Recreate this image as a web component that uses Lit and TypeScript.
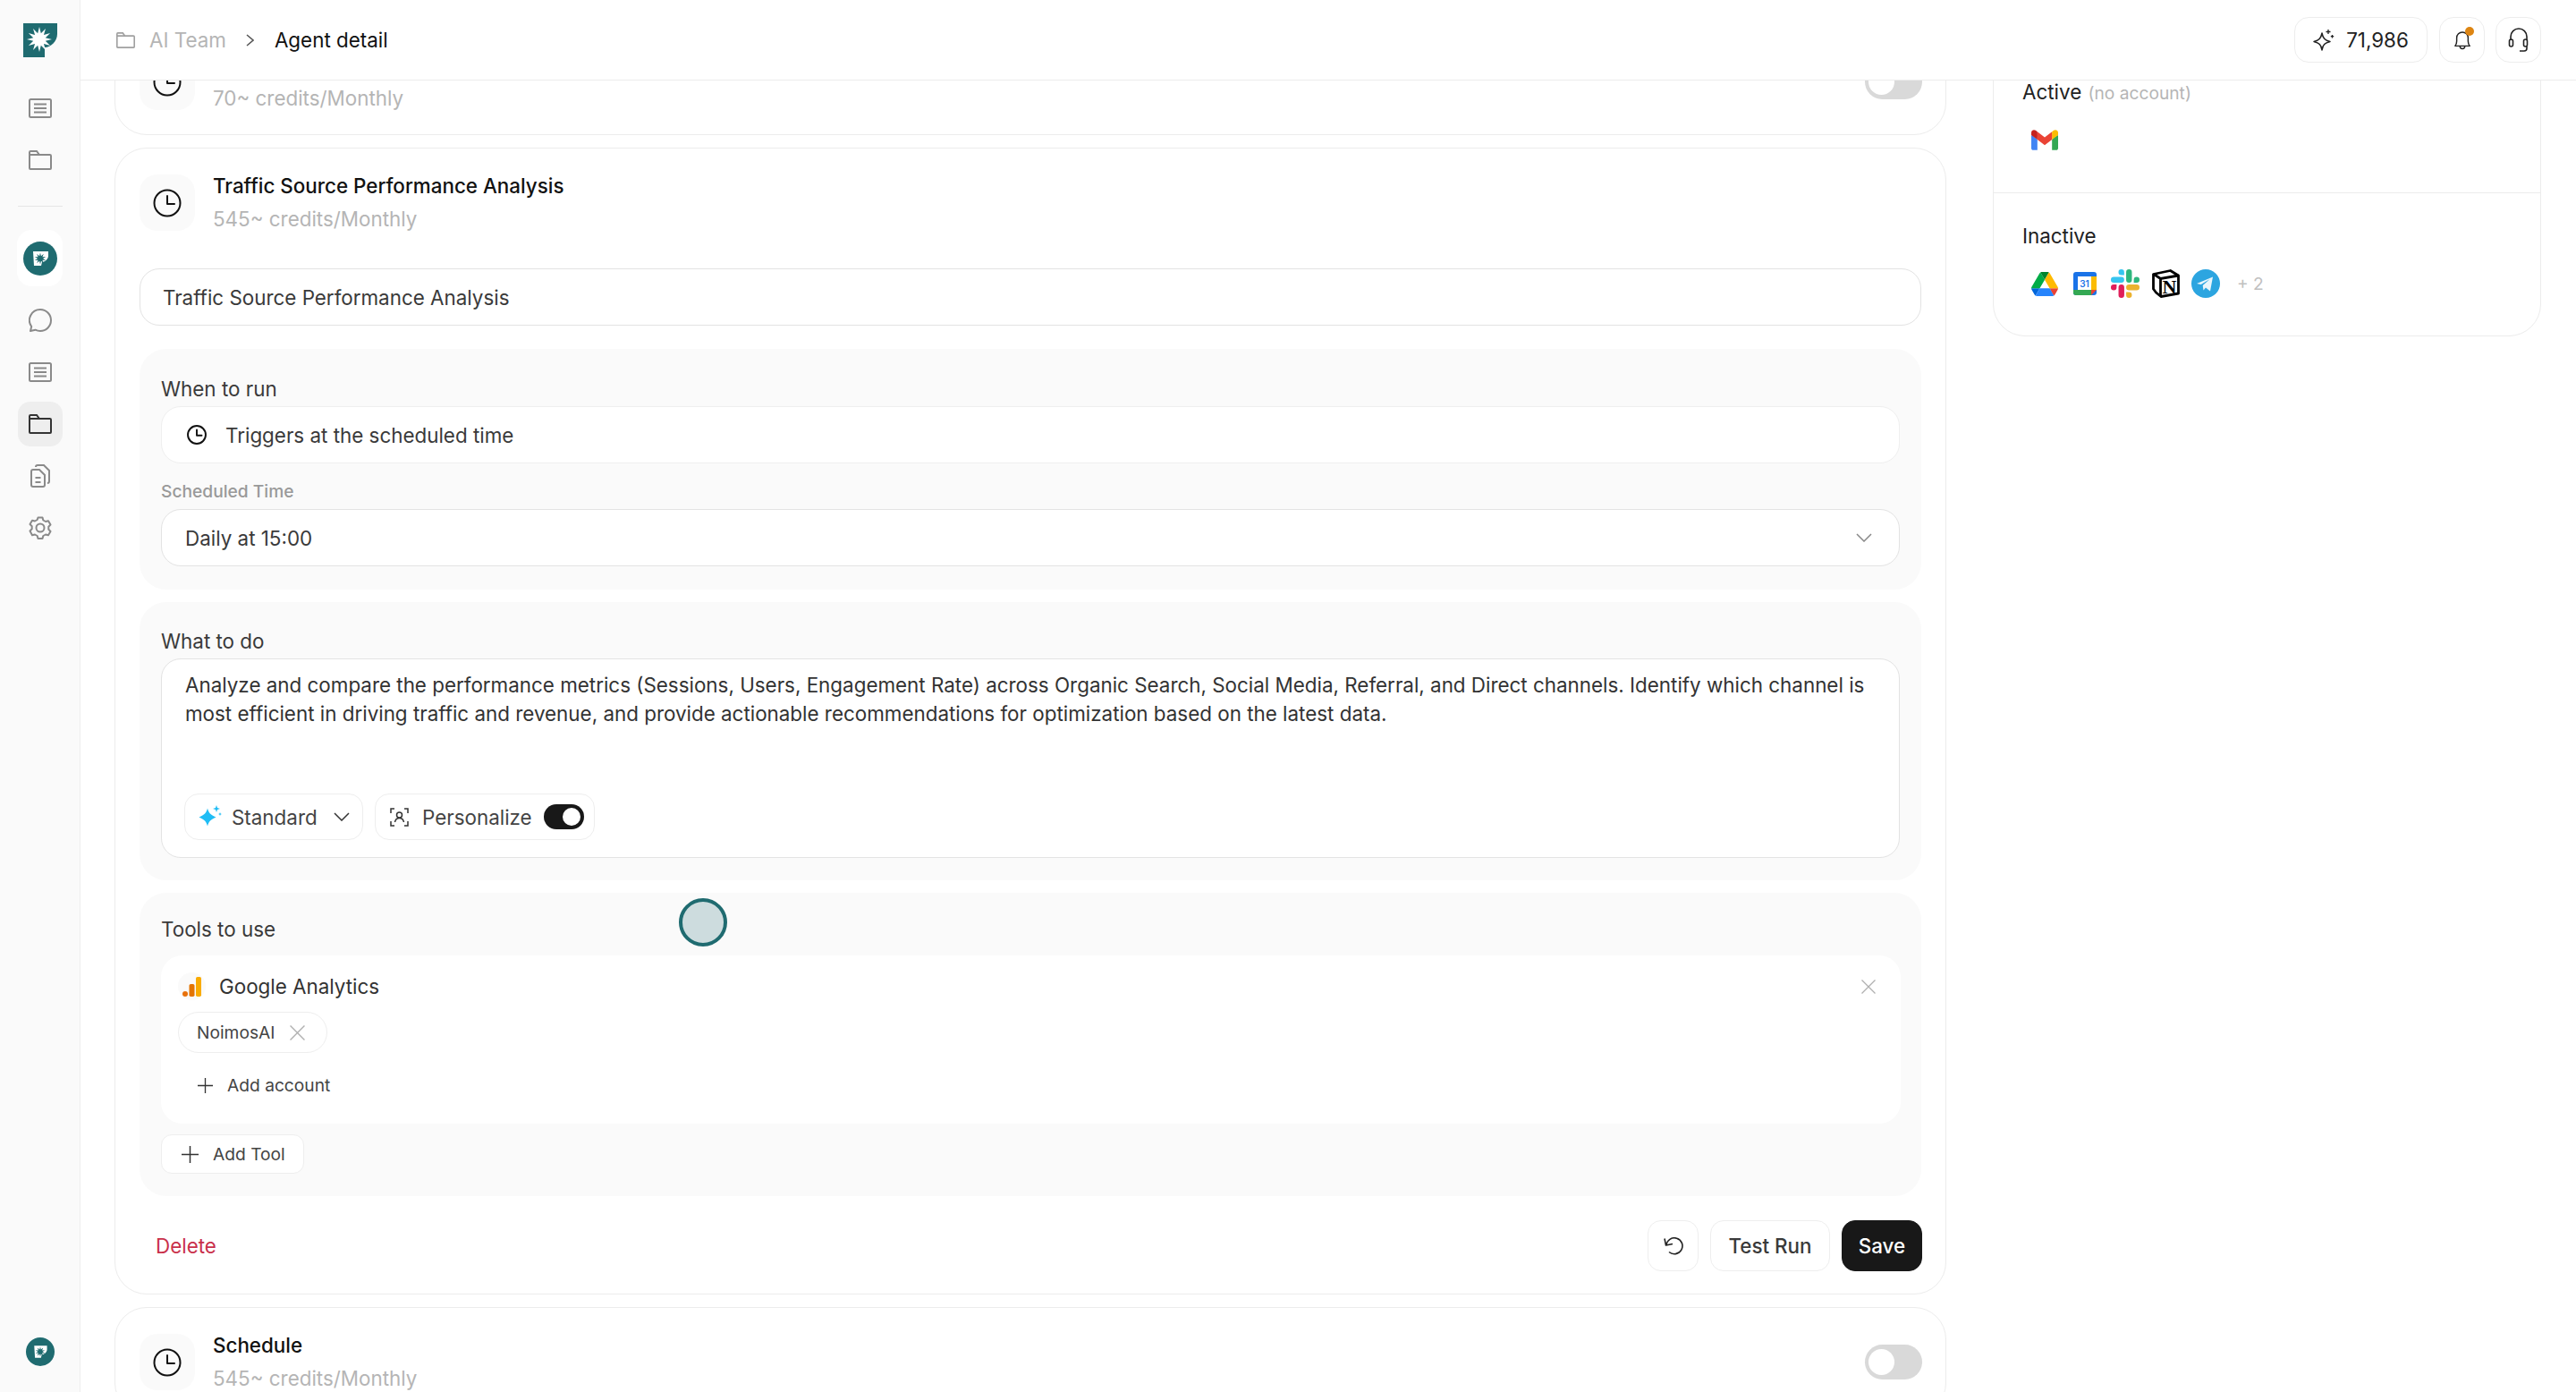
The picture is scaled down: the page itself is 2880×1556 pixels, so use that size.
import { LitElement, html, css } from "lit";
import { customElement } from "lit/decorators.js";

function star(cx: number, cy: number, R: number, r: number, n: number): string {
  const pts: string[] = [];
  for (let i = 0; i < n * 2; i++) {
    const a = (Math.PI * i) / n - Math.PI / 2;
    const q = i % 2 === 0 ? R : r;
    pts.push(`${(cx + q * Math.cos(a)).toFixed(2)},${(cy + q * Math.sin(a)).toFixed(2)}`);
  }
  return pts.join(" ");
}

const clock = (s: number) => html`<svg width=${s} height=${s} viewBox="0 0 32 32" fill="none" stroke="#111" stroke-width=${s < 30 ? 2.8 : 2}><circle cx="16" cy="16" r="14.500"/><path d="M16 8v9h8" stroke-linecap="round" stroke-linejoin="round"/></svg>`;
const listIcon = html`<svg width="26" height="22" viewBox="0 0 26 22" fill="none" stroke="currentColor" stroke-width="2"><rect x="1" y="1" width="24" height="20" rx="1.500"/><path d="M6 6.500h14M6 11h14M6 15.500h14"/></svg>`;
const folderIcon = (w: number, h: number) => html`<svg width=${w} height=${h} viewBox="0 0 26 22" fill="none" stroke="currentColor" stroke-width="2"><path d="M1 20V2.200C1 1.500 1.500 1 2.200 1H9l3 4h11.800c.7 0 1.200.5 1.200 1.200V20c0 .6-.5 1-1 1H2c-.5 0-1-.4-1-1ZM1 5h11"/></svg>`;
const plus = (s: number) => html`<svg width=${s} height=${s} viewBox="0 0 18 18" fill="none" stroke="#333" stroke-width="1.400"><path d="M9 0v18M0 9h18"/></svg>`;
const cross = (s: number) => html`<svg width=${s} height=${s} viewBox="0 0 16 16" fill="none" stroke="#b0b0b0" stroke-width="1.300"><path d="M.5.5l15 15M15.500.5l-15 15"/></svg>`;
const smallLogo = (s: number) => html`<svg width=${s} height=${s} viewBox="0 0 38 38"><circle cx="19" cy="19" r="19" fill="#1f6b70"/><path d="M11 11h17v5c0 3.500-3.500 6.500-7 7l-1 4H12Z" fill="#fff"/><polygon points=${star(19, 19, 6.5, 3, 10)} fill="#1f6b70"/></svg>`;
const toggleOff = html`<span class="tog"><span class="knob"></span></span>`;

@customElement("app-root")
export class AppRoot extends LitElement {
  static styles = css`
    :host { display: block; width: 2880px; height: 1556px; overflow: hidden; background: #fff; font-family: Inter, "Liberation Sans", sans-serif; color: #333; font-size: 22.4px; position: relative; }
    * { box-sizing: border-box; }
    svg { display: block; flex: none; }
    .shell { display: flex; height: 100%; }
    .side { width: 90px; flex: none; background: #fafafa; border-right: 1px solid #eee; display: flex; flex-direction: column; align-items: center; padding: 26px 0 29px; }
    .logo { margin-bottom: 32px; }
    .nav { width: 50px; height: 50px; border-radius: 14px; display: flex; align-items: center; justify-content: center; color: #8a8a8a; margin-bottom: 8px; }
    .nav.on { background: #eee; color: #333; }
    .sep { width: 50px; height: 1px; background: #e6e6e6; margin: 18px 0 26px; }
    .avatar-tile { width: 51px; height: 63px; border-radius: 16px; background: #fff; display: flex; align-items: center; justify-content: center; margin-bottom: 13px; }
    .foot { margin-top: auto; }
    .main { flex: 1; min-width: 0; display: flex; flex-direction: column; }
    .top { height: 90px; flex: none; border-bottom: 1px solid #ececec; display: flex; align-items: center; padding: 0 39px 0 40px; background: #fff; position: relative; z-index: 2; }
    .crumb { display: flex; align-items: center; color: #b5b5b5; gap: 16px; }
    .crumb .cur { color: #111; }
    .fold { color: #a0a0a0; }
    .chev { margin: 0 7px 0 6px; }
    .spacer { flex: 1; }
    .tbtn { height: 51px; border: 1px solid #ededed; border-radius: 16px; display: flex; align-items: center; justify-content: center; background: #fff; position: relative; }
    .credits { width: 149px; gap: 13px; margin-right: 13px; color: #222; }
    .square { width: 51px; }
    .square + .square { margin-left: 12px; }
    .dot { position: absolute; width: 10px; height: 10px; border-radius: 50%; background: #dd8513; top: 10px; right: 11px; }
    .scroll { flex: 1; min-height: 0; overflow: hidden; }
    .cols { display: flex; gap: 52px; padding: 0 39px 0 38px; margin-top: -60px; align-items: flex-start; }
    .left { width: 2048px; flex: none; display: flex; flex-direction: column; gap: 14px; }
    .card { border: 1px solid #ececec; border-radius: 36px; padding: 29px 27px 27px; background: #fff; }
    .card.open { padding-bottom: 25px; }
    .chead { display: flex; align-items: center; gap: 20px; height: 63px; margin-right: -1px; }
    .tile { width: 62px; height: 63px; border-radius: 20px; background: #fafafa; display: flex; align-items: center; justify-content: center; flex: none; }
    .ctitle { color: #111; font-weight: 500; line-height: 28px; min-height: 28px; }
    .csub { color: #b5b5b5; line-height: 28px; margin-top: 9px; }
    .grow { flex: 1; }
    .tog { width: 64px; height: 39px; border-radius: 20px; background: #d9d9d9; display: block; position: relative; flex: none; }
    .knob { position: absolute; left: 4px; top: 5px; width: 29px; height: 29px; border-radius: 50%; background: #fff; }
    .box { background: #fff; border: 1px solid #e3e3e3; border-radius: 22px; display: flex; align-items: center; height: 64px; padding: 0 26px; color: #3a3a3a; }
    .name { margin: 42px 0 26px; padding-left: 25px; }
    .sec { background: #fafafa; border-radius: 30px; padding: 30px 24px 26px; margin-bottom: 14px; }
    .sec:last-of-type { margin-bottom: 0; }
    .what { padding-top: 29px; padding-bottom: 25px; }
    .use { padding-top: 26px; padding-bottom: 25px; }
    .lab { line-height: 30px; color: #3a3a3a; margin-bottom: 4px; }
    .box.soft { border-color: #efefef; gap: 21px; padding-left: 28px; }
    .lab2 { font-size: 19.2px; line-height: 26px; color: #999; font-weight: 500; margin: 18px 0 7px; }
    .caret { margin-left: auto; margin-right: 4px; }
    .area { background: #fff; border: 1px solid #e3e3e3; border-radius: 22px; height: 223px; padding: 13px 26px 19px; display: flex; flex-direction: column; }
    .area p { margin: 0; line-height: 32px; color: #333; }
    .chips { margin-top: auto; margin-left: -1px; display: flex; gap: 13px; }
    .chip { height: 52px; border: 1px solid #eee; border-radius: 16px; display: flex; align-items: center; background: #fff; color: #444; white-space: nowrap; }
    .std { width: 200px; padding: 0 0 0 15px; }
    .std span { margin: 0 18px 0 11px; }
    .per { width: 246px; padding: 0 0 0 16px; }
    .per span:first-of-type { margin: 0 13px 0 15px; }
    .sw { width: 45px; height: 28px; border-radius: 14px; background: #181818; position: relative; flex: none; }
    .sw i { position: absolute; width: 20px; height: 20px; border-radius: 50%; background: #fff; right: 4px; top: 4px; }
    .tools { background: #fff; border-radius: 24px; padding: 19px 19px 23px; margin: 14px 0 12px; width: 1945px; }
    .trow { display: flex; align-items: center; height: 31px; }
    .gatile { width: 31px; height: 31px; border-radius: 50%; background: #fafafa; display: flex; align-items: center; justify-content: center; margin-right: 15px; }
    .trow .x { margin-left: auto; margin-right: 9px; }
    .pill { display: inline-flex; align-items: center; height: 46px; margin-top: 13px; border: 1px solid #eee; border-radius: 23px; padding: 0 24px 0 20px; gap: 17px; font-size: 19.2px; color: #444; background: #fff; }
    .addacc { display: flex; align-items: center; gap: 16px; height: 40px; margin: 16px 0 0 22px; font-size: 19.2px; color: #444; }
    .addtool { display: inline-flex; align-items: center; height: 44px; width: 160px; padding: 0 22px; gap: 16px; border: 1px solid #eee; border-radius: 12px; background: #fff; font-size: 19.2px; color: #444; white-space: nowrap; }
    .bar { display: flex; align-items: center; margin: 27px -1px 0 0; padding-left: 18px; }
    .del { color: #c9304a; }
    .btn { height: 57px; border: 1px solid #eee; border-radius: 15px; display: flex; align-items: center; justify-content: center; background: #fff; color: #3a3a3a; margin-left: 13px; }
    .btn.ic { width: 57px; }
    .btn.tr { width: 134px; font-weight: 500; }
    .btn.sv { width: 90px; background: #181818; border-color: #181818; color: #fff; font-weight: 500; }
    .panel { flex: 1; border: 1px solid #ececec; border-radius: 36px; background: #fff; }
    .pblock { padding: 57px 32px 43px; }
    .pblock + .pblock { border-top: 1px solid #ececec; padding: 33px 32px 42px; }
    .ptitle { line-height: 30px; color: #222; }
    .ptitle span { color: #b5b5b5; font-size: 19.2px; margin-left: 1px; }
    .apps { display: flex; align-items: center; gap: 13px; height: 32px; margin: 22px 0 0 9px; }
    .apps.first { margin-top: 21px; }
    .cell { width: 32px; display: flex; justify-content: center; }
    .more { color: #c0c0c0; font-size: 19.2px; margin-left: 6px; }
    .cursor { position: absolute; left: 759px; top: 1004px; width: 54px; height: 54px; border-radius: 50%; border: 4px solid #1f6b70; background: #cddcde; z-index: 5; }
  `;

  render() {
    return html`
      <div class="shell">
        <aside class="side">
          <svg class="logo" width="38" height="38" viewBox="0 0 38 38"><path d="M0 0h38v12c0 8-7 15-14 15v11H0Z" fill="#1f6b70"/><polygon points=${star(18, 18, 14, 7, 12)} fill="#fff"/></svg>
          <div class="nav">${listIcon}</div>
          <div class="nav">${folderIcon(26, 22)}</div>
          <div class="sep"></div>
          <div class="avatar-tile">${smallLogo(38)}</div>
          <div class="nav"><svg width="26" height="26" viewBox="0 0 26 26" fill="none" stroke="currentColor" stroke-width="2"><path d="M13 1a12 12 0 0 1 0 24c-2 0-4-.500-5.500-1.300L2 25l1.200-5A12 12 0 0 1 13 1Z" stroke-linejoin="round"/></svg></div>
          <div class="nav">${listIcon}</div>
          <div class="nav on">${folderIcon(26, 22)}</div>
          <div class="nav"><svg width="22" height="26" viewBox="0 0 22 26" fill="none" stroke="currentColor" stroke-width="2"><path d="M1 8c0-1 1-2 2-2h7l6 6v11c0 1.500-1 2-2 2H3c-1 0-2-.500-2-2ZM6 3c0-1 1-2 2-2h7l6 6v12c0 1-.500 2-2 2M5.500 15h6M5.500 20h6"/></svg></div>
          <div class="nav"><svg width="26" height="26" viewBox="0 0 26 26" fill="none" stroke="currentColor" stroke-width="2"><circle cx="13" cy="13" r="4.500"/><path d="M10.500 1.500h5l.8 3 2.700 1.500 3-.8 2.500 4.300-2.200 2.200v3l2.200 2.300-2.500 4.300-3-.8-2.700 1.500-.8 3h-5l-.8-3-2.700-1.500-3 .8L1.500 16.500 3.700 14.200v-3L1.500 9 4 4.700l3 .8L9.700 4Z" stroke-linejoin="round"/></svg></div>
          <div class="foot">${smallLogo(32)}</div>
        </aside>
        <div class="main">
          <header class="top">
            <div class="crumb">
              <span class="fold">${folderIcon(21, 18)}</span>
              <span>AI Team</span>
              <svg class="chev" width="9" height="14" viewBox="0 0 9 14" fill="none" stroke="#555" stroke-width="1.500"><path d="M1 1l7 6-7 6"/></svg>
              <span class="cur">Agent detail</span>
            </div>
            <div class="spacer"></div>
            <div class="tbtn credits">
              <svg width="24" height="25" viewBox="0 0 24 25" fill="none" stroke="#222" stroke-width="1.500"><path d="M10 5c1 5.500 3 8 9 9.500-6 1.500-8 3.500-9 9.500-1-6-3-8-9-9.500 6-1.500 8-4 9-9.500Z" stroke-linejoin="round"/><path d="M17 1v5M14.500 3.500h5M21.500 7v3.400M19.800 8.700h3.400" stroke-width="1.300"/></svg>
              <span>71,986</span>
            </div>
            <div class="tbtn square">
              <svg width="20" height="24" viewBox="0 0 22 26" fill="none" stroke="#222" stroke-width="1.600"><path d="M2 20c1.500-2 2-3 2-6V10a7 7 0 0 1 14 0v4c0 3 .500 4 2 6ZM8 20.500c0 2 1.500 3 3 3s3-1 3-3" stroke-linejoin="round"/></svg>
              <span class="dot"></span>
            </div>
            <div class="tbtn square">
              <svg width="24" height="30" viewBox="0 0 24 30" fill="none" stroke="#222" stroke-width="1.600"><path d="M3 15V11a9 9 0 0 1 18 0v4"/><rect x="1.500" y="14" width="4" height="8" rx="2"/><rect x="17.500" y="14" width="4" height="8" rx="2"/><path d="M21 22v2c0 2-1 3-3 3h-5"/></svg>
            </div>
          </header>
          <div class="scroll">
            <div class="cols">
              <div class="left">
                <section class="card">
                  <div class="chead">
                    <div class="tile">${clock(32)}</div>
                    <div><div class="ctitle"></div><div class="csub">70~ credits/Monthly</div></div>
                    <div class="grow"></div>
                    ${toggleOff}
                  </div>
                </section>
                <section class="card open">
                  <div class="chead">
                    <div class="tile">${clock(32)}</div>
                    <div><div class="ctitle">Traffic Source Performance Analysis</div><div class="csub">545~ credits/Monthly</div></div>
                  </div>
                  <div class="box name">Traffic Source Performance Analysis</div>
                  <div class="sec">
                    <div class="lab">When to run</div>
                    <div class="box soft">${clock(22)}<span>Triggers at the scheduled time</span></div>
                    <div class="lab2">Scheduled Time</div>
                    <div class="box"><span>Daily at 15:00</span><svg class="caret" width="18" height="10" viewBox="0 0 18 10" fill="none" stroke="#888" stroke-width="1.500"><path d="M1 1l8 8 8-8"/></svg></div>
                  </div>
                  <div class="sec what">
                    <div class="lab">What to do</div>
                    <div class="area">
                      <p>Analyze and compare the performance metrics (Sessions, Users, Engagement Rate) across Organic Search, Social Media, Referral, and Direct channels. Identify which channel is most efficient in driving traffic and revenue, and provide actionable recommendations for optimization based on the latest data.</p>
                      <div class="chips">
                        <div class="chip std">
                          <svg width="26" height="30" viewBox="0 0 26 30" fill="#1fbdf5"><path d="M10 5.500c1.200 5 3.500 7.500 9.500 10-6 2.500-8.300 5-9.500 10-1.200-5-3.500-7.500-9.500-10 6-2.500 8.300-5 9.500-10Z"/><path d="M20 2l1 3 3 1-3 1-1 3-1-3-3-1 3-1ZM24 10l.6 1.400L26 12l-1.400.6L24 14l-.6-1.400L22 12l1.400-.6Z"/></svg>
                          <span>Standard</span>
                          <svg width="18" height="10" viewBox="0 0 18 10" fill="none" stroke="#333" stroke-width="1.500"><path d="M1 1l8 8 8-8"/></svg>
                        </div>
                        <div class="chip per">
                          <svg width="21" height="21" viewBox="0 0 21 21" fill="none" stroke="#333" stroke-width="1.500"><path d="M1 6V1h4M16 1h4v5M20 15v5h-4M5 20H1v-5"/><circle cx="10.500" cy="8" r="3"/><path d="M5.500 16c.5-3 2.500-4.500 5-4.500s4.500 1.500 5 4.500"/></svg>
                          <span>Personalize</span>
                          <span class="sw"><i></i></span>
                        </div>
                      </div>
                    </div>
                  </div>
                  <div class="sec use">
                    <div class="lab">Tools to use</div>
                    <div class="tools">
                      <div class="trow">
                        <span class="gatile"><svg width="21" height="22" viewBox="0 0 21 22"><rect x="15" y="0" width="6" height="22" rx="1.800" fill="#f9ab00"/><rect x="7.500" y="8" width="6" height="14" rx="1.800" fill="#e37400"/><circle cx="3" cy="19" r="3" fill="#e8710a"/></svg></span>
                        <span>Google Analytics</span>
                        <span class="x">${cross(16)}</span>
                      </div>
                      <div class="pill"><span>NoimosAI</span>${cross(17)}</div>
                      <div class="addacc">${plus(17)}<span>Add account</span></div>
                    </div>
                    <div class="addtool">${plus(19)}<span>Add Tool</span></div>
                  </div>
                  <div class="bar">
                    <span class="del">Delete</span>
                    <div class="grow"></div>
                    <div class="btn ic"><svg width="22" height="20" viewBox="0 0 22 20" fill="none" stroke="#222" stroke-width="1.600"><path d="M3 9a9 9 0 1 1 3 7.500M1 1.500l1.500 7.500L10 7.500" stroke-linejoin="round"/></svg></div>
                    <div class="btn tr">Test Run</div>
                    <div class="btn sv">Save</div>
                  </div>
                </section>
                <section class="card">
                  <div class="chead">
                    <div class="tile">${clock(32)}</div>
                    <div><div class="ctitle">Schedule</div><div class="csub">545~ credits/Monthly</div></div>
                    <div class="grow"></div>
                    ${toggleOff}
                  </div>
                </section>
              </div>
              <aside class="panel">
                <div class="pblock">
                  <div class="ptitle">Active <span>(no account)</span></div>
                  <div class="apps first">
                    <span class="cell"><svg width="30" height="23" viewBox="0 0 256 193"><path fill="#4285F4" d="M58.182 192.050V93.140L27.507 65.077 0 49.504v125.091c0 9.658 7.825 17.455 17.455 17.455h40.727Z"/><path fill="#34A853" d="M197.818 192.050h40.727c9.659 0 17.455-7.826 17.455-17.455V49.505l-31.156 17.837-27.026 25.798v98.910Z"/><path fill="#EA4335" d="m58.182 93.140-4.174-38.647 4.174-36.989L128 69.868l69.818-52.364 4.669 34.992-4.669 40.644L128 145.504z"/><path fill="#FBBC04" d="M197.818 17.504V93.140L256 49.504V26.231c0-21.585-24.640-33.890-41.890-20.945l-16.292 12.218Z"/><path fill="#C5221F" d="m0 49.504 26.759 20.070L58.182 93.140V17.504L41.890 5.286C24.610-7.660 0 4.646 0 26.230v23.273Z"/></svg></span>
                  </div>
                </div>
                <div class="pblock">
                  <div class="ptitle">Inactive</div>
                  <div class="apps">
                    <span class="cell"><svg width="30" height="27" viewBox="0 0 87.300 78"><path d="m6.600 66.850 3.850 6.650c.8 1.400 1.950 2.500 3.300 3.300l13.750-23.800h-27.500c0 1.550.4 3.100 1.200 4.500z" fill="#0066da"/><path d="m43.650 25-13.750-23.800c-1.350.8-2.500 1.900-3.300 3.300l-25.400 44a9.060 9.060 0 0 0 -1.200 4.500h27.500z" fill="#00ac47"/><path d="m73.550 76.800c1.350-.8 2.500-1.900 3.300-3.300l1.600-2.750 7.650-13.250c.8-1.400 1.200-2.950 1.200-4.500h-27.502l5.852 11.500z" fill="#ea4335"/><path d="m43.650 25 13.750-23.800c-1.350-.8-2.900-1.200-4.500-1.200h-18.500c-1.600 0-3.150.45-4.500 1.200z" fill="#00832d"/><path d="m59.800 53h-32.300l-13.750 23.800c1.350.8 2.900 1.200 4.500 1.200h50.800c1.600 0 3.150-.45 4.500-1.200z" fill="#2684fc"/><path d="m73.400 26.500-12.700-22c-.8-1.400-1.950-2.500-3.300-3.300l-13.750 23.800 16.150 28h27.450c0-1.550-.4-3.100-1.200-4.500z" fill="#ffba00"/></svg></span>
                    <span class="cell"><svg width="26" height="26" viewBox="0 0 26 26"><rect width="26" height="26" rx="3" fill="#1a73e8"/><rect x="5" y="5" width="15" height="15" fill="#fff"/><rect x="20" y="5" width="6" height="15" fill="#fbbc04"/><path d="M0 20h20v6H3a3 3 0 0 1-3-3Z" fill="#34a853"/><path d="M20 20h6l-6 6Z" fill="#ea4335"/><text x="12.500" y="16.500" text-anchor="middle" font-family="Inter, sans-serif" font-size="10" font-weight="600" fill="#1a73e8">31</text></svg></span>
                    <span class="cell"><svg width="32" height="32" viewBox="0 0 54 54"><path fill="#36C5F0" d="M19.700 0a5.400 5.400 0 0 0 0 10.800h5.400V5.400A5.400 5.400 0 0 0 19.700 0zm0 14.400H5.400a5.400 5.400 0 0 0 0 10.800h14.300a5.400 5.400 0 0 0 0-10.800z"/><path fill="#2EB67D" d="M54 19.800a5.400 5.400 0 0 0-10.800 0v5.400h5.400a5.400 5.400 0 0 0 5.400-5.400zm-14.400 0V5.400a5.400 5.400 0 0 0-10.800 0v14.400a5.400 5.400 0 0 0 10.800 0z"/><path fill="#ECB22E" d="M34.200 54a5.400 5.400 0 0 0 0-10.800h-5.400v5.400a5.400 5.400 0 0 0 5.400 5.400zm0-14.400h14.400a5.400 5.400 0 0 0 0-10.800H34.200a5.400 5.400 0 0 0 0 10.800z"/><path fill="#E01E5A" d="M0 34.200a5.400 5.400 0 0 0 10.800 0v-5.400H5.400A5.400 5.400 0 0 0 0 34.200zm14.400 0v14.400a5.400 5.400 0 0 0 10.800 0V34.200a5.400 5.400 0 0 0-10.800 0z"/></svg></span>
                    <span class="cell"><svg width="31" height="32" viewBox="0 0 31 32"><path d="M1.500 5.500 20.500 1.500l9 5.500v20L10 30.500 4.500 26l-3-4Z" fill="#fff" stroke="#000" stroke-width="2.800" stroke-linejoin="round"/><path d="M2 5.500 9.500 10.500l20-3.500M9.500 10.500v19.500" fill="none" stroke="#000" stroke-width="2.800"/><text x="19.500" y="26.500" text-anchor="middle" font-family="'Liberation Serif', serif" font-size="22" font-weight="700" fill="#000">N</text></svg></span>
                    <span class="cell"><svg width="32" height="32" viewBox="0 0 32 32"><circle cx="16" cy="16" r="16" fill="#2ca5e0"/><path d="M6 16 24 8.500l-3 16-5-4-2.500 3-.8-5.500 8-7-10 6Z" fill="#e9f5fb"/></svg></span>
                    <span class="more">+ 2</span>
                  </div>
                </div>
              </aside>
            </div>
          </div>
        </div>
      </div>
      <div class="cursor"></div>
    `;
  }
}
